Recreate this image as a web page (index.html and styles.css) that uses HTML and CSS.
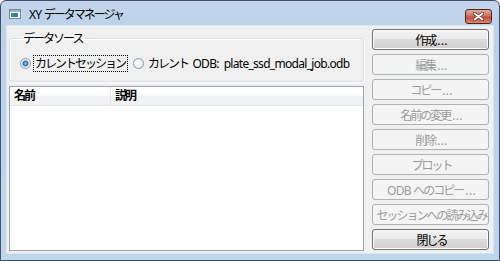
FILE: index.html
```html
<!DOCTYPE html>
<html lang="ja">
<head>
    <meta charset="UTF-8">
    <title>XY データマネージャ</title>
    <link rel="stylesheet" href="styles.css">
</head>
<body>
    <div class="window">
        <div class="titlebar">
            <svg class="app-icon" width="12" height="10" viewBox="0 0 12 10">
                <rect x="0.5" y="0.5" width="11" height="9" fill="#f4f6f8" stroke="#7a8896"/>
                <rect x="1" y="1" width="10" height="2" fill="#9fb4c8"/>
                <rect x="2" y="4" width="3" height="4" fill="#3a9a4a"/>
                <rect x="5" y="4" width="4" height="4" fill="#3c78c0"/>
            </svg>
            <span class="title"><span class="lat">XY </span>データマネージャ</span>
            <div class="close-btn">
                <svg width="11" height="9" viewBox="0 0 11 9">
                    <path d="M1.5 1.5 L9.5 7.5 M9.5 1.5 L1.5 7.5" stroke="#5c2a24" stroke-width="3.4" stroke-linecap="round"/>
                    <path d="M1.5 1.5 L9.5 7.5 M9.5 1.5 L1.5 7.5" stroke="#fff" stroke-width="2" stroke-linecap="round"/>
                </svg>
            </div>
        </div>

        <div class="client">
            <div class="left-col">
                <fieldset class="groupbox">
                    <legend>データソース</legend>
                    <div class="radio-row">
                        <label class="radio">
                            <span class="radio-dot checked"></span>
                            <span class="radio-label focus">カレントセッション</span>
                        </label>
                        <label class="radio">
                            <span class="radio-dot"></span>
                            <span class="radio-label">カレント<span class="lat sp"> ODB:&nbsp; plate_ssd_modal_job.odb</span></span>
                        </label>
                    </div>
                </fieldset>

                <div class="listview">
                    <div class="list-header">
                        <div class="col col-name">名前</div>
                        <div class="col col-desc">説明</div>
                    </div>
                </div>
            </div>

            <div class="button-col">
                <button class="btn">作成<span class="dots">...</span></button>
                <button class="btn" disabled>編集<span class="dots">...</span></button>
                <button class="btn" disabled>コピー<span class="dots">...</span></button>
                <button class="btn" disabled>名前の変更<span class="dots">...</span></button>
                <button class="btn" disabled>削除<span class="dots">...</span></button>
                <button class="btn" disabled>プロット</button>
                <button class="btn" disabled><span class="lat">ODB </span>へのコピー<span class="dots">...</span></button>
                <button class="btn" disabled>セッションへの読み込み</button>
                <button class="btn">閉じる</button>
            </div>
        </div>
    </div>
</body>
</html>
```

FILE: styles.css
```css
body {
    margin: 0;
    background: #ffffff;
    font-family: "Noto Sans", "Noto Sans CJK JP", sans-serif;
    font-size: 12px;
    letter-spacing: -2px;
    color: #000;
}
.lat {
    letter-spacing: -0.7px;
}
.sp {
    padding-left: 2px;
}
.dots {
    letter-spacing: 0.3px;
    padding-left: 2px;
}
.window {
    width: 498px;
    height: 259px;
    border: 1px solid #3f5068;
    border-radius: 6px 6px 0 0;
    background: linear-gradient(#c3d5ec, #b9d1ea 40px, #bed5ee);
    display: flex;
    flex-direction: column;
}
.titlebar {
    height: 24px;
    display: flex;
    align-items: center;
    padding: 0 7px 0 7px;
}
.app-icon {
    margin: 2px 8px 0 1px;
}
.title {
    flex: 1;
    margin-top: 2px;
    white-space: nowrap;
}
.close-btn {
    width: 25px;
    height: 13px;
    margin-top: 6px;
    border: 1px solid #4e2420;
    border-radius: 3px;
    background: linear-gradient(#e0a79c, #cf6f61 45%, #c14c3a 55%, #d98a6f);
    display: flex;
    align-items: center;
    justify-content: center;
}
.client {
    flex: 1;
    margin: 0 5px 6px 5px;
    background: #f0f0f0;
    border: 1px solid #dbe5f1;
    display: flex;
    gap: 8px;
    padding: 3px 2px 2px 2px;
}
.left-col {
    width: 355px;
    display: flex;
    flex-direction: column;
    gap: 4px;
}
.groupbox {
    margin: 2px 0 0 0;
    padding: 9px 8px 0 10px;
    border: 1px solid #d5dfe5;
    border-radius: 3px;
    box-shadow: inset 1px 1px 0 #fff, 1px 1px 0 #fff;
    height: 51px;
    box-sizing: border-box;
}
.groupbox legend {
    padding: 0 3px 0 2px;
    margin-left: 1px;
    line-height: 15px;
}
.radio-row {
    display: flex;
    align-items: center;
    gap: 5px;
    white-space: nowrap;
}
.radio {
    display: flex;
    align-items: center;
    gap: 2px;
}
.radio-dot {
    width: 11px;
    height: 11px;
    border-radius: 50%;
    border: 1px solid #8f9aa3;
    background: radial-gradient(circle at 40% 40%, #fdfdfd, #dfe3e6);
    box-sizing: border-box;
}
.radio-dot.checked {
    background: radial-gradient(circle, #8ec4ec 0, #2a6fb0 2.5px, #e6eef4 3.5px, #f8f8f8);
}
.radio-label {
    padding: 0 2px 0 1px;
    border: 1px dotted transparent;
    line-height: 15px;
}
.radio-label.focus {
    border-color: #000;
}
.listview {
    flex: 1;
    background: #fff;
    border: 1px solid #9ea2a8;
    display: flex;
    flex-direction: column;
}
.list-header {
    height: 18px;
    display: flex;
    background: linear-gradient(#ffffff, #ffffff 45%, #f1f2f4 50%, #f1f2f4);
    border-bottom: 1px solid #e3e6ea;
}
.col {
    line-height: 18px;
    padding-left: 4px;
    font-weight: 600;
}
.col-name {
    width: 96px;
    border-right: 1px solid #e3e6ea;
}
.col-desc {
    flex: 1;
}
.button-col {
    width: 117px;
    display: flex;
    flex-direction: column;
    gap: 4px;
}
.btn {
    height: 21px;
    padding: 0 0 0 2px;
    font: inherit;
    letter-spacing: -2px;
    color: #000;
    border: 1px solid #707070;
    border-radius: 3px;
    background: linear-gradient(#f2f2f2, #ebebeb 49%, #dddddd 50%, #cfcfcf);
    box-shadow: inset 0 0 0 1px #fcfcfc;
    white-space: nowrap;
    overflow: hidden;
}
.btn:disabled {
    color: #9c9c9c;
    border-color: #adb2b5;
    background: #f4f4f4;
    box-shadow: none;
}
```
